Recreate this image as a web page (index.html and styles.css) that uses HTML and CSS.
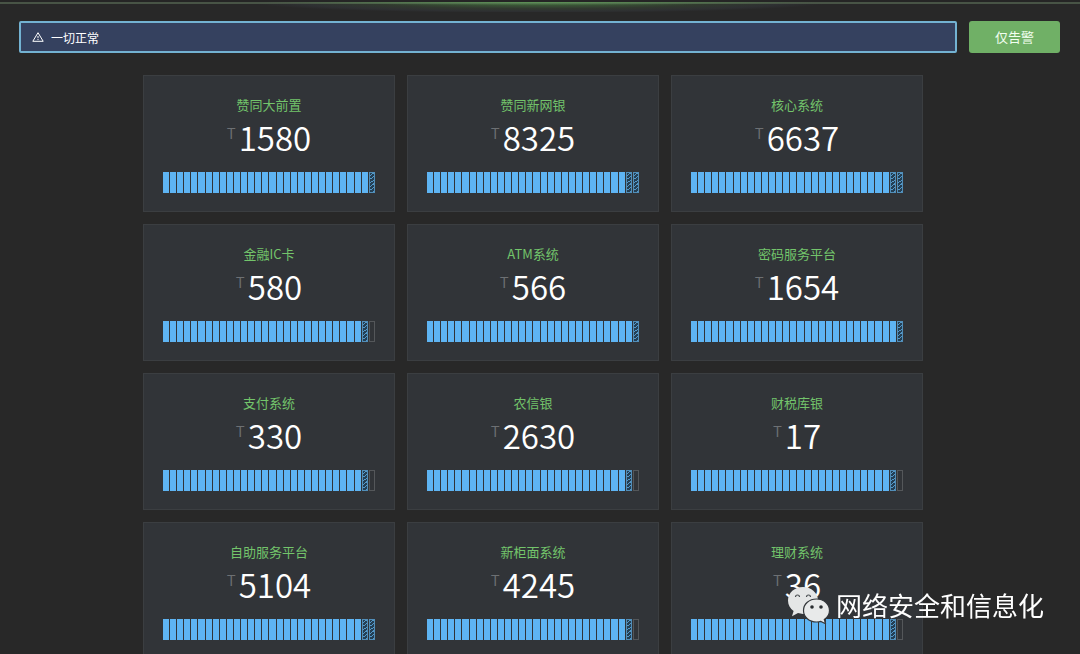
FILE: index.html
```
<!DOCTYPE html>
<html lang="zh-CN">
<head>
<meta charset="utf-8">
<title>系统监控</title>
<link rel="stylesheet" href="styles.css">
</head>
<body>
<div class="topline"></div>
<header class="toolbar">
  <div class="alert" role="status">
    <svg class="alert-icon" viewBox="0 0 12 12" width="12" height="12" aria-hidden="true"><path d="M6 1.700 11.200 10.300H.8Z" fill="none" stroke="currentColor" stroke-linejoin="round"/><path d="M6 5v2.200M6 8v1" stroke="currentColor"/></svg>
    <span>一切正常</span>
  </div>
  <button class="filter" type="button">仅告警</button>
</header>
<main class="grid" id="grid"></main>
<div class="watermark">
  <svg class="watermark-logo" viewBox="0 0 44 38" width="44" height="38" aria-hidden="true">
    <path d="M16 1C7.700 1 1 6.800 1 14.500c0 4.400 2.200 8.100 5.600 10.600L5 30.200l6-3.100c1.600.5 3.300.8 5 .8 8.300 0 15-5.900 15-13.400S24.300 1 16 1Z" fill="#e4e6e6"/>
    <path d="M8.500 11a2 2 0 0 1 4 0M19.500 11a2 2 0 0 1 4 0" fill="none" stroke="#4a4f52" stroke-width="1.200"/>
    <path d="M29.500 13C22.300 13 16.500 18 16.500 24.500S22.300 36 29.500 36c1.500 0 3-.2 4.300-.6l4.700 2.300-1.200-4.200c3.200-2.100 5.200-5.300 5.200-9C42.500 18 36.700 13 29.500 13Z" fill="#e8eaea" stroke="#34383c" stroke-width="1.200"/>
    <circle cx="25" cy="21" r="1.800" fill="#292d30"/><circle cx="34" cy="21" r="1.800" fill="#292d30"/>
  </svg>
  <span>网络安全和信息化</span>
</div>
<script src="app.js"></script>
</body>
</html>
```
FILE: styles.css
```
* { box-sizing: border-box; }
html { overflow: hidden; background: #282828; }
body {
  margin: 0;
  color: #fff;
  font-family: "Noto Sans CJK SC", sans-serif;
}
.topline {
  height: 12px;
  border-top: 2px solid #252525;
  background:
    radial-gradient(ellipse 280px 3px at 50% 0, #5f9a58, transparent) no-repeat,
    linear-gradient(#485446, #485446) top / 100% 2px no-repeat,
    radial-gradient(ellipse 290px 11px at 50% 0, #44703f, #31392f 60%, #2e3032 85%, transparent) no-repeat;
}
.toolbar {
  display: flex;
  gap: 12px;
  padding: 9px 20px 0 19px;
}
.alert {
  flex: 1;
  display: flex;
  align-items: center;
  gap: 7px;
  height: 32px;
  padding: 0 11px;
  border: 2px solid #73b2d2;
  border-radius: 2px;
  background: #35415f;
  font-size: 12px;
}
.alert-icon { display: block; }
.filter {
  width: 91px;
  height: 32px;
  border: 0;
  border-radius: 3px;
  background: #70b066;
  color: #f2fff0;
  font: 13px/30px "Noto Sans CJK SC", sans-serif;
}
.grid {
  display: grid;
  grid-template-columns: repeat(3, 252px);
  justify-content: center;
  gap: 12px;
  padding: 22px 14px 22px 0;
}
.card {
  display: flex;
  flex-direction: column;
  align-items: center;
  padding: 19px 19px 18px;
  border: 1px solid #3b3e41;
  background: #313438;
}
.name {
  margin: 0;
  color: #73c46b;
  font-size: 13px;
  font-weight: 400;
  line-height: 20px;
}
.value {
  display: flex;
  align-items: flex-start;
  gap: 3px;
  margin: 0 0 13px;
  font-size: 33px;
  font-weight: 350;
  line-height: 44px;
}
.unit {
  color: #6d7073;
  font-size: 15px;
  line-height: 36px;
}
.meter {
  display: flex;
  gap: 1px;
  align-self: stretch;
  height: 21px;
}
.seg { flex: 1; background: #5eb4f3; }
.seg-part {
  background: repeating-linear-gradient(145deg, #5499ca 0 1px, #243f54 1px 3px);
  box-shadow: inset 0 0 0 1px #518eb9;
}
.seg-empty { background: none; box-shadow: inset 0 0 0 1px #54575a; }
.watermark {
  position: fixed;
  right: 36px;
  bottom: 28px;
  display: flex;
  align-items: center;
  gap: 5px;
  font-size: 26px;
  line-height: 42px;
}
.watermark-logo { display: block; }
```
FILE: app.js
```
const SEGMENTS = 30;
const systems = [
  ["赞同大前置", 1580, 29, 1], ["赞同新网银", 8325, 28, 2], ["核心系统", 6637, 28, 2],
  ["金融IC卡", 580, 28, 1], ["ATM系统", 566, 29, 1], ["密码服务平台", 1654, 29, 1],
  ["支付系统", 330, 28, 1], ["农信银", 2630, 28, 1], ["财税库银", 17, 28, 1],
  ["自助服务平台", 5104, 28, 2], ["新柜面系统", 4245, 28, 1], ["理财系统", 36, 28, 1]
];
document.getElementById("grid").innerHTML = systems.map(([name, value, full, part]) => {
  let segs = "";
  for (let i = 0; i < SEGMENTS; i++) {
    const state = i < full ? "" : i < full + part ? " seg-part" : " seg-empty";
    segs += `<span class="seg${state}"></span>`;
  }
  return `<section class="card"><h2 class="name">${name}</h2>` +
    `<p class="value"><span class="unit">T</span><span>${value}</span></p>` +
    `<div class="meter">${segs}</div></section>`;
}).join("");
```
